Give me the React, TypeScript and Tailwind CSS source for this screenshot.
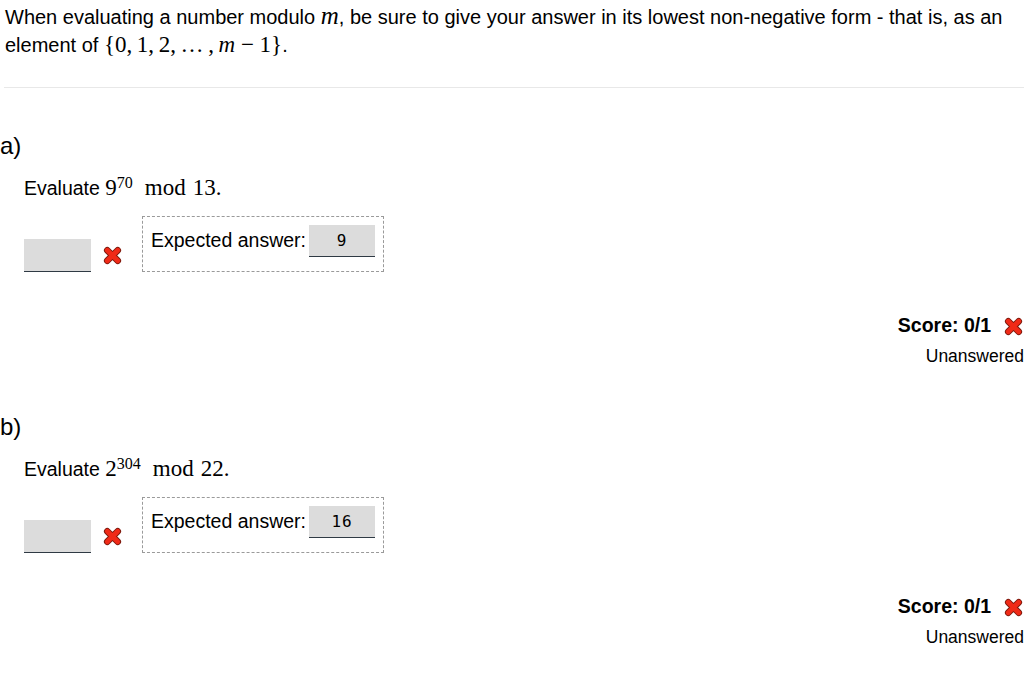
import React from 'react';

function RedX({ className = '' }: { className?: string }) {
  return (
    <svg viewBox="0 0 20 20" className={className} aria-hidden="true">
      <g strokeLinecap="round">
        <path d="M4.5 4.5 15.5 15.5M15.5 4.5 4.5 15.5" stroke="#7d1a0e" strokeWidth="7" />
        <path d="M4.5 4.5 15.5 15.5M15.5 4.5 4.5 15.5" stroke="#f02a17" strokeWidth="5" />
      </g>
    </svg>
  );
}

interface PartProps {
  label: string;
  base: string;
  exp: string;
  mod: string;
  expected: string;
}

function Part({ label, base, exp, mod, expected }: PartProps) {
  return (
    <div>
      <div className="text-[24px] leading-[28px] h-[28px]">{label}</div>
      <div className="pl-6 mt-[14px] flex items-baseline h-[28px] leading-[28px] text-[19.5px]">
        <span>Evaluate&nbsp;</span>
        <span className="font-['Liberation_Serif',serif] text-[23px]">
          {base}
          <sup className="text-[16px] -top-[0.45em]">{exp}</sup>
          <span className="ml-[12px]">mod</span>
          <span className="ml-[7px]">{mod}.</span>
        </span>
      </div>
      <div className="pl-6 mt-[14px] flex items-start">
        <div className="mt-[23px] w-[67px] h-[33px] bg-[#dcdcdc] border-b border-[#2f3a44]" />
        <RedX className="mt-[30px] ml-[12px] w-[19px] h-[19px]" />
        <div className="ml-[20px] w-[242px] h-[56px] border border-dashed border-[#9a9a9a] flex items-start pl-[8px] pt-[8px]">
          <span className="text-[19.5px] leading-[30px]">Expected answer:</span>
          <div className="ml-[3px] w-[66px] h-[32px] bg-[#dcdcdc] border-b border-[#2f3a44] flex items-center justify-center font-['DejaVu_Sans_Mono',monospace] text-[16px] tracking-[0.06em]">
            {expected}
          </div>
        </div>
      </div>
      <div className="mt-[43px] flex flex-col items-end">
        <div className="flex items-center h-[22px]">
          <span className="font-bold text-[19.5px]">Score: 0/1</span>
          <RedX className="ml-[13px] mr-[1px] w-[19px] h-[19px]" />
        </div>
        <div className="mt-[9px] text-[17.5px] leading-[20px]">Unanswered</div>
      </div>
    </div>
  );
}

export default function App() {
  return (
    <div className="w-[1024px] h-[673px] overflow-hidden bg-white text-black font-['Liberation_Sans',Arial,sans-serif]">
      <div className="pl-[5px] pr-2 pt-[3px] text-[20px] leading-[28px]">
        When evaluating a number modulo{' '}
        <i className="font-['Liberation_Serif',serif] text-[25px] leading-none">m</i>, be sure to give your answer in its
        lowest non-negative form - that is, as an element of{' '}
        <span className="font-['Liberation_Serif',serif] text-[23px] leading-none whitespace-nowrap">
          {'{0,\u20091,\u20092,\u2009…\u2009,\u2009'}<i>m</i>{' − 1}'}
        </span>
        .
      </div>
      <div className="ml-[4px] mt-[28px] border-t border-[#e8e8e8]" />
      <div className="mt-[44px]">
        <Part label="a)" base="9" exp="70" mod="13" expected="9" />
      </div>
      <div className="mt-[47px]">
        <Part label="b)" base="2" exp="304" mod="22" expected="16" />
      </div>
    </div>
  );
}
